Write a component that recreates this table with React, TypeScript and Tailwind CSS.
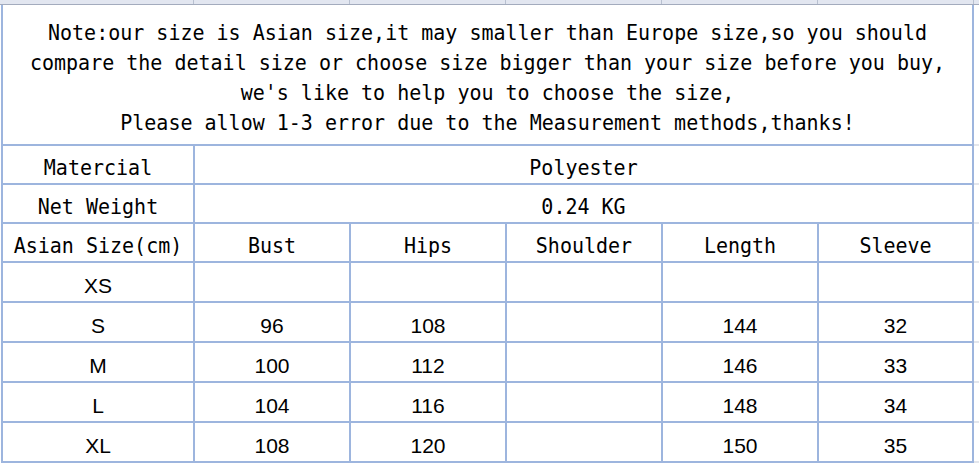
import React from "react";

const mono = "font-['DejaVu_Sans_Mono','Liberation_Mono',monospace] text-[20px] text-black";
const sans = "font-['Liberation_Sans',Arial,sans-serif] text-[21px] text-black";

function Cell({ children, kind = "mono", span }: { children?: React.ReactNode; kind?: "mono" | "sans"; span?: boolean }) {
  return (
    <div
      className={`bg-white flex items-center justify-center leading-none whitespace-pre ${
        kind === "mono" ? `${mono} pt-[5px]` : `${sans} pt-[6px]`
      } ${span ? "col-span-5" : ""}`}
    >
      {kind === "mono" ? <span className="inline-block scale-y-110">{children}</span> : children}
    </div>
  );
}

const rows: (string | number)[][] = [
  ["XS", "", "", "", "", ""],
  ["S", 96, 108, "", 144, 32],
  ["M", 100, 112, "", 146, 33],
  ["L", 104, 116, "", 148, 34],
  ["XL", 108, 120, "", 150, 35],
];

export default function App() {
  return (
    <div className="w-[979px] h-[464px] overflow-hidden bg-white">
      {/* spreadsheet column header strip */}
      <div className="flex h-[5px] bg-[#e2e6f0] border-b border-[#a3abbd]">
        <div className="w-[194px] border-r border-[#b8c0d0]" />
        <div className="w-[156px] border-r border-[#b8c0d0]" />
        <div className="w-[156px] border-r border-[#b8c0d0]" />
        <div className="w-[156px] border-r border-[#b8c0d0]" />
        <div className="w-[156px] border-r border-[#b8c0d0]" />
        <div className="w-[156px] border-r border-[#b8c0d0]" />
        <div className="flex-1" />
      </div>
      <div className="flex">
        <div className="w-[1px] shrink-0" />
        <div className="grid w-[973px] shrink-0 bg-[#9db5de] px-[2px] pb-[2px] gap-[2px] grid-cols-[190px_154px_154px_154px_154px_153px] grid-rows-[139px_37px_37px_37px_38px_38px_38px_38px_38px]">
          <div className={`col-span-6 bg-white flex flex-col items-center justify-center pt-[5px] ${mono} leading-[30px] whitespace-pre`}>
            <div className="scale-y-110">Note:our size is Asian size,it may smaller than Europe size,so you should</div>
            <div className="scale-y-110">compare the detail size or choose size bigger than your size before you buy,</div>
            <div className="scale-y-110">we's like to help you to choose the size,</div>
            <div className="scale-y-110">Please allow 1-3 error due to the Measurement methods,thanks!</div>
          </div>
          <Cell>Matercial</Cell>
          <Cell span>Polyester</Cell>
          <Cell>Net Weight</Cell>
          <Cell span>0.24 KG</Cell>
          <Cell>Asian Size(cm)</Cell>
          <Cell>Bust</Cell>
          <Cell>Hips</Cell>
          <Cell>Shoulder</Cell>
          <Cell>Length</Cell>
          <Cell>Sleeve</Cell>
          {rows.map((r, i) => (
            <React.Fragment key={i}>
              {r.map((v, j) => (
                <Cell key={j} kind="sans">
                  {v === "" ? null : String(v)}
                </Cell>
              ))}
            </React.Fragment>
          ))}
        </div>
        <div className="flex-1 flex flex-col">
          <div className="h-[141px] border-b-2 border-[#e3e6ec]" />
          <div className="h-[39px] border-b-2 border-[#e3e6ec]" />
          <div className="h-[39px] border-b-2 border-[#e3e6ec]" />
          <div className="h-[39px] border-b-2 border-[#e3e6ec]" />
          <div className="h-[40px] border-b-2 border-[#e3e6ec]" />
          <div className="h-[40px] border-b-2 border-[#e3e6ec]" />
          <div className="h-[40px] border-b-2 border-[#e3e6ec]" />
          <div className="h-[40px] border-b-2 border-[#e3e6ec]" />
          <div className="h-[40px] border-b-2 border-[#e3e6ec]" />
        </div>
      </div>
    </div>
  );
}
